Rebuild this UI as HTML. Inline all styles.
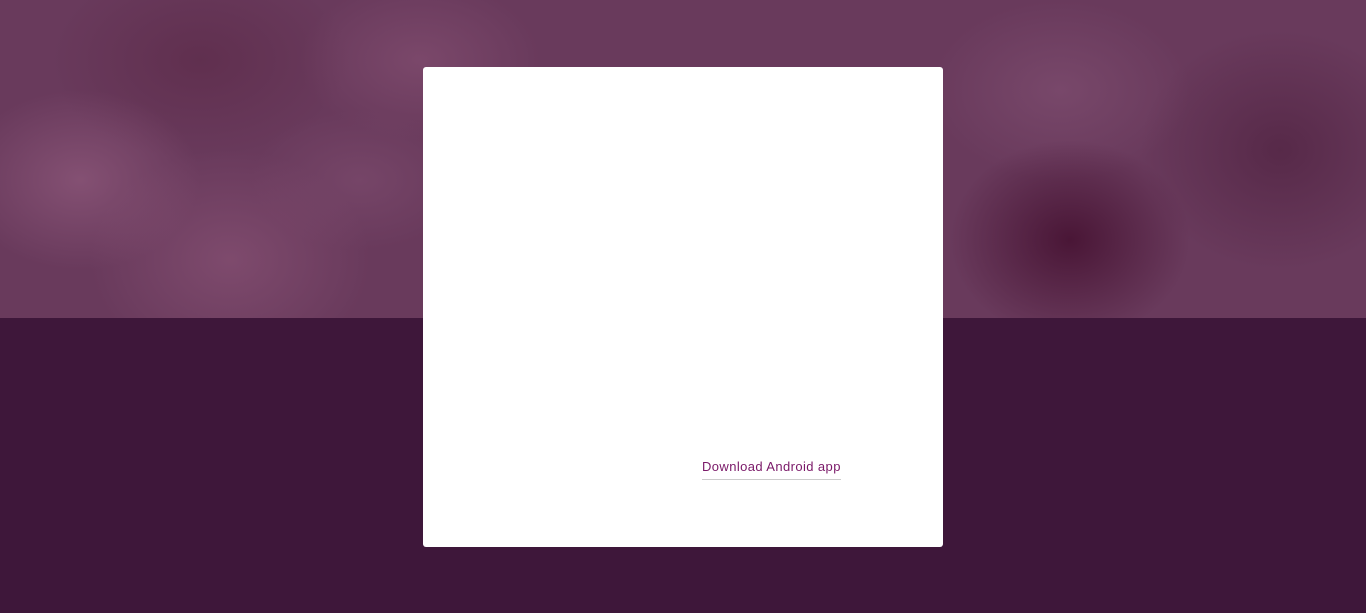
<!DOCTYPE html>
<html><head><style>
html,body{margin:0;padding:0;width:1366px;height:613px;overflow:hidden;background:#3e173a;font-family:"Liberation Sans",sans-serif}
.hero{position:absolute;left:0;top:0;width:1366px;height:318px;background:
radial-gradient(ellipse 120px 90px at 80px 180px,rgba(150,95,130,.6),transparent),
radial-gradient(ellipse 140px 110px at 230px 260px,rgba(140,85,120,.6),transparent),
radial-gradient(ellipse 120px 80px at 420px 60px,rgba(140,85,120,.5),transparent),
radial-gradient(ellipse 110px 70px at 360px 180px,rgba(130,80,115,.5),transparent),
radial-gradient(ellipse 120px 100px at 1070px 240px,rgba(70,18,50,.9),transparent),
radial-gradient(ellipse 130px 90px at 1060px 90px,rgba(135,85,120,.5),transparent),
radial-gradient(ellipse 140px 120px at 1280px 150px,rgba(75,30,60,.6),transparent),
radial-gradient(ellipse 150px 100px at 200px 60px,rgba(90,40,70,.6),transparent),
#693a5c}
.card{position:absolute;left:423px;top:67px;width:520px;height:480px;background:#fff;border-radius:3px}
a{position:absolute;left:702px;top:459px;font-size:13px;color:#7a1868;text-decoration:none;border-bottom:1px solid #ccc;padding-bottom:5px;letter-spacing:0.4px}
</style></head><body>
<div class="hero"></div>
<div class="card"></div>
<a>Download Android app</a>
</body></html>
